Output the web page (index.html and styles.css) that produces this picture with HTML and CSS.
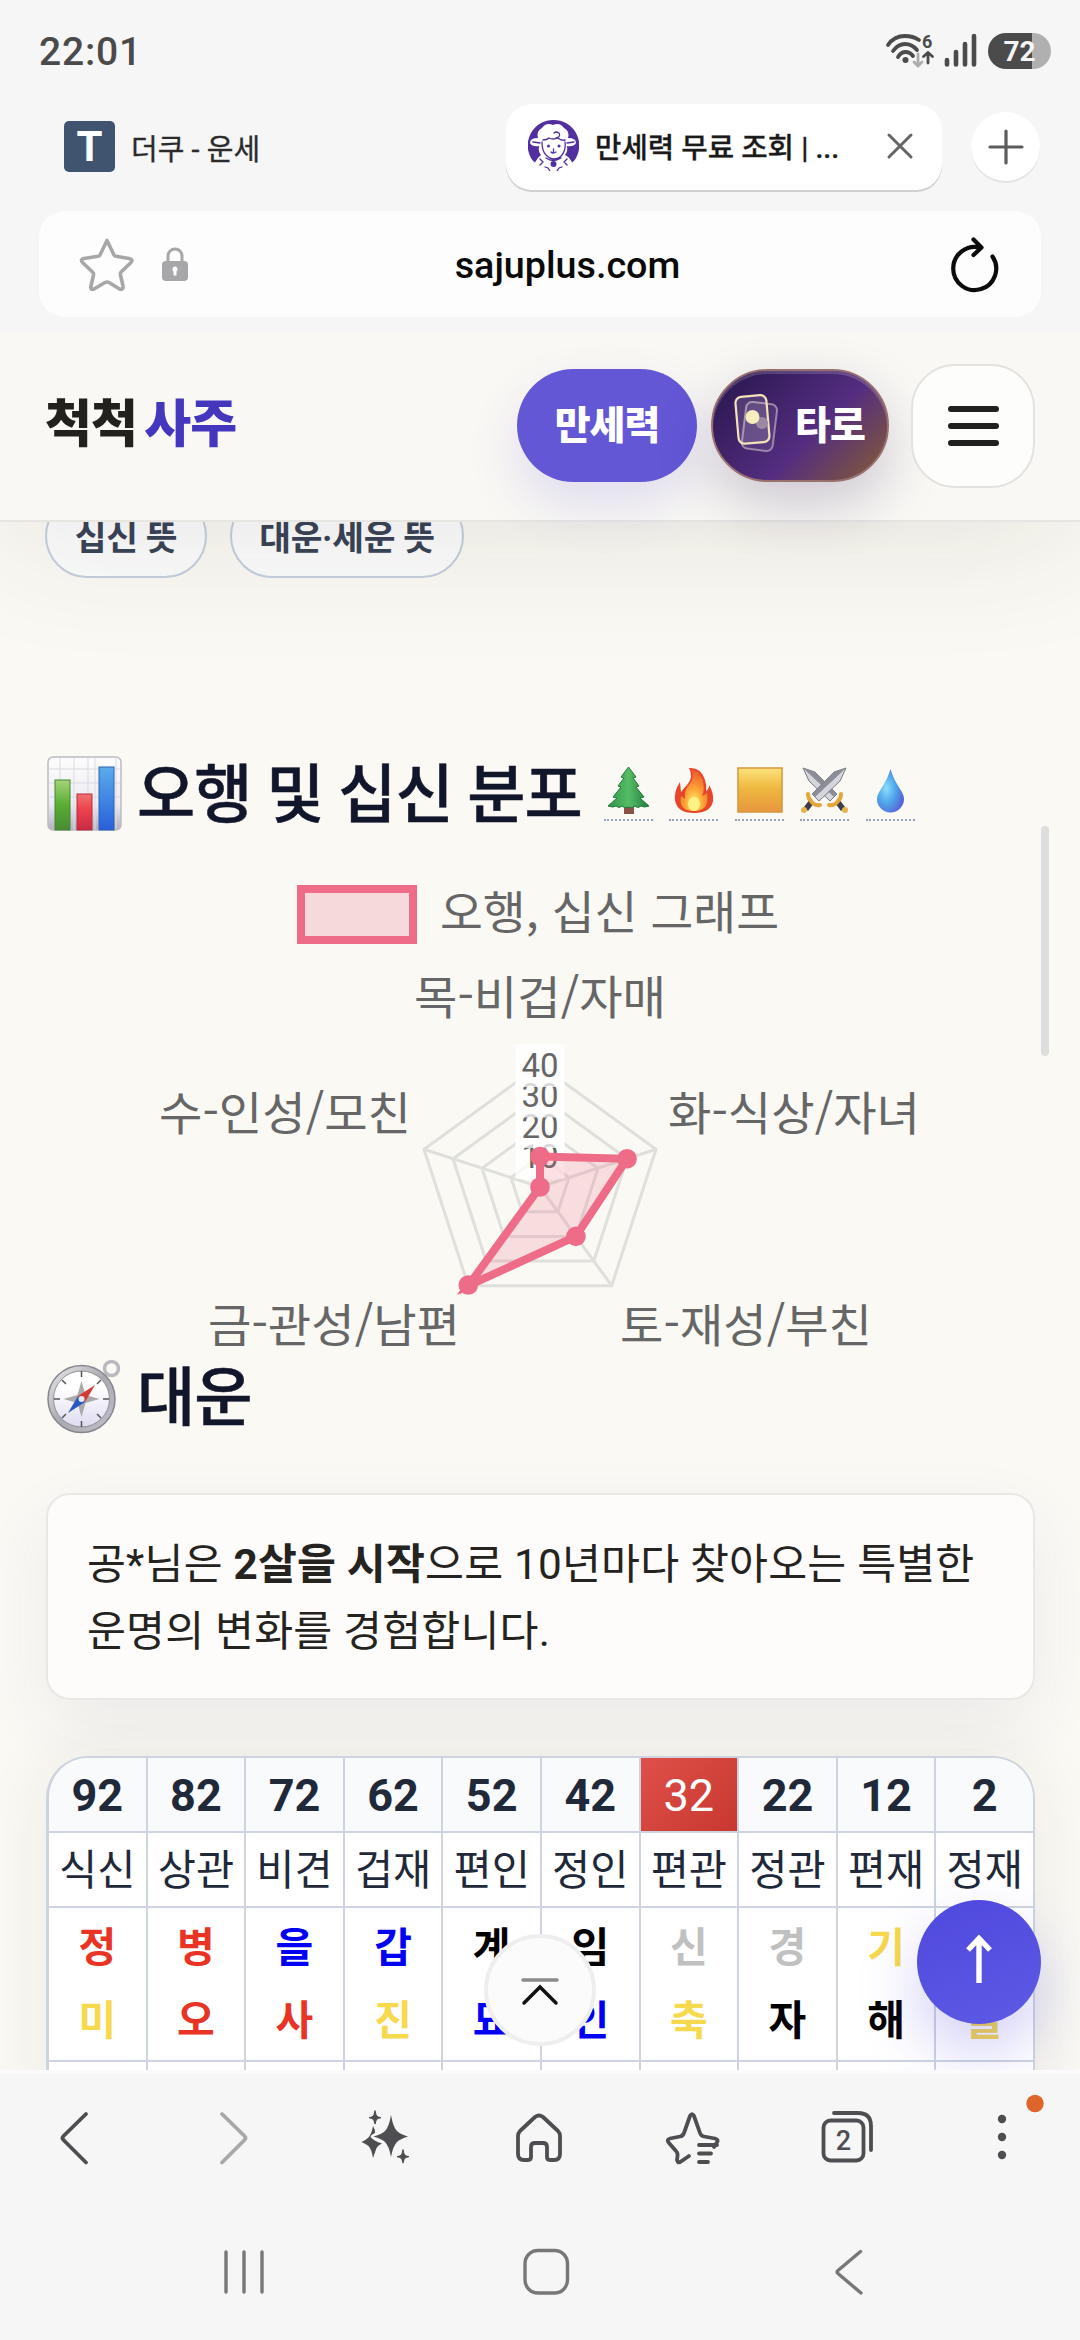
FILE: index.html
```html
<!DOCTYPE html>
<html lang="ko">
<head>
<meta charset="utf-8">
<title>만세력 무료 조회</title>
<link rel="stylesheet" href="styles.css">
</head>
<body>
<div class="phone">
  <div class="status">
    <span class="clock">22:01</span>
    <div class="status-icons">
      <svg class="signal" width="94" height="38" viewBox="884 32 94 38" fill="none" stroke="#4b4b4b" stroke-linecap="round">
        <path stroke-width="3.8" d="M888 45Q894 36 905 36Q913 36 919 40M893 51Q898 44 905 44Q912 44 917 50M898 57Q901 52 905.500 52Q910 52 913 56"/>
        <circle cx="905.500" cy="60" r="3" fill="#4b4b4b" stroke="none"/>
        <path stroke="#adadad" stroke-width="2.800" d="M918 54V66M914 62L918 66L922 62"/>
        <path stroke-width="2.800" d="M928 63V53M923.500 56.500L928 52.500L932.500 56.500"/>
        <text x="922" y="48" class="wifi-gen">6</text>
        <path stroke-width="4.600" d="M947 60V64.500M956 52V64.500M965 44V64.500M974 36V64.500"/>
      </svg>
      <span class="battery">72</span>
    </div>
  </div>

  <div class="tabs">
    <div class="tab">
      <span class="fav-t">T</span>
      <span class="tab-name">더쿠 - 운세</span>
    </div>
    <div class="tab active">
      <svg width="51" height="51" viewBox="0 0 51 51">
        <path fill="#512fa0" d="M25.500 0A25.500 25.500 0 0 1 48 38Q46 42 40 45H11Q5 42 3 38A25.500 25.500 0 0 1 25.500 0z"/>
        <path fill="#fff" d="M25 5q7-3 11 3q6 3 4 10q8 0 8 5q-2 4-9 3q1 6-2 9q8 3 8 16H6q-1-10 7-16q-3-3-2-9q-7 1-9-3q0-5 8-5q-2-7 4-10q4-6 11-3z"/>
        <path fill="none" stroke="#512fa0" stroke-width="1.300" stroke-linecap="round" d="M15 20q4 0 6-2q4 2 9 0q3 3 7 2M14 22q0 9 4 13q4 4 8 4q5 0 8-4q4-5 3-13M5 22l7 1M46 22l-7 1M28 18q5-1 3-5q-3-2-5 0M23 32q2 2 5 0M25.500 29v3M18 38q7 5 15 0M12 39l3 3l-3 3M39 39l-3 3l3 3M17 47l3 1l2 3M34 47l-3 1l-2 3"/>
        <circle cx="20.500" cy="26" r="1.500" fill="#512fa0"/><circle cx="31" cy="26" r="1.500" fill="#512fa0"/>
        <circle cx="25.500" cy="44" r="3" fill="#512fa0"/>
      </svg>
      <span class="tab-name strong">만세력 무료 조회 | ...</span>
      <svg class="close" width="28" height="28" viewBox="0 0 28 28" fill="none" stroke="#666" stroke-width="3" stroke-linecap="round"><path d="M3 3L25 25M25 3L3 25"/></svg>
    </div>
    <div class="new-tab">
      <svg width="36" height="36" viewBox="0 0 36 36" fill="none" stroke="#5c5c5c" stroke-width="3.200" stroke-linecap="round"><path d="M18 2V34M2 18H34"/></svg>
    </div>
  </div>

  <div class="address">
    <svg width="112" height="58" viewBox="78 236 112 58">
      <path d="M107 241.500L114 256Q114.500 257 116 257.300L129 259.500Q134 260.500 130.500 264L121 273Q120 274.500 120.500 276L123 287Q123.500 291.500 119.500 290L109 283.500Q107 282.500 105 283.500L94 290Q90 291.500 91 287L93.500 276Q94 274.500 92.500 273L83 264Q79.500 260.500 84 259.500L98 257.300Q99.500 257 100 256Z" fill="none" stroke="#a7a7a9" stroke-width="3.600" stroke-linejoin="round"/>
      <path d="M168 264V257a7 7 0 0 1 14 0V264" fill="none" stroke="#a7a7a9" stroke-width="3"/>
      <rect x="162" y="262" width="26" height="20" rx="4" fill="#a7a7a9"/>
      <path d="M175 267.500a2.800 2.800 0 0 1 1.500 5v4h-3v-4a2.800 2.800 0 0 1 1.500-5z" fill="#fff"/>
    </svg>
    <span class="url">sajuplus.com</span>
    <svg width="54" height="60" viewBox="945 232 54 60" fill="none" stroke="#0b0b0b" stroke-width="4.200" stroke-linecap="round" stroke-linejoin="round">
      <path d="M990.500 254.500A21.500 21.500 0 1 1 979 246M971.500 237.500L979.500 245.500L971.500 253"/>
    </svg>
  </div>

  <header class="site-head">
    <div class="logo">척척<em>사주</em></div>
    <a class="pill saju">만세력</a>
    <a class="pill tarot">
      <svg width="50" height="70" viewBox="730 395 50 70">
        <rect x="744" y="407" width="31" height="47" rx="6" fill="#ffffff14" stroke="#9b85a8" stroke-width="2" transform="rotate(7 760 430)"/>
        <rect x="737" y="400" width="31" height="47" rx="6" fill="#ffffff22" stroke="#f3e3b8" stroke-width="2.200" transform="rotate(-5 752 424)"/>
        <circle cx="762" cy="427" r="6" fill="#9b88a4"/>
        <circle cx="752.500" cy="421" r="7" fill="#f7ecbd"/>
      </svg>
      <span>타로</span>
    </a>
    <div class="menu"><i></i><i></i><i></i></div>
  </header>

  <main class="page">
    <div class="chips"><span class="chip">십신 뜻</span><span class="chip wide">대운·세운 뜻</span></div>

    <h2 class="heading first">
      <svg width="75" height="75" viewBox="0 0 75 75">
        <defs>
          <linearGradient id="paper" x2="0" y2="1"><stop offset="0" stop-color="#fdfdfd"/><stop offset=".65" stop-color="#ececf1"/><stop offset="1" stop-color="#b4b0bf"/></linearGradient>
          <linearGradient id="green" x2="0" y2="1"><stop offset="0" stop-color="#a5d47a"/><stop offset=".5" stop-color="#59ad31"/><stop offset="1" stop-color="#4a8a35"/></linearGradient>
          <linearGradient id="red" x2="0" y2="1"><stop offset="0" stop-color="#ee7470"/><stop offset=".4" stop-color="#ee4450"/><stop offset="1" stop-color="#c92a42"/></linearGradient>
          <linearGradient id="blue" x2="0" y2="1"><stop offset="0" stop-color="#5baceb"/><stop offset="1" stop-color="#2a5fda"/></linearGradient>
        </defs>
        <rect x="1" y="1" width="73" height="73" rx="5" fill="url(#paper)" stroke="#bcbac3" stroke-width="1.500"/>
        <path stroke="#d9dbe3" stroke-width="1" d="M2 13H73M2 27H73M2 41H73M2 55H73M13 2V73M27 2V73M41 2V73M48 2V73M69 2V73"/>
        <rect x="8" y="24" width="15" height="50" fill="url(#green)" stroke="#458538"/>
        <rect x="30" y="38" width="15" height="36" fill="url(#red)" stroke="#b82c3e"/>
        <rect x="52" y="11" width="15" height="63" fill="url(#blue)" stroke="#2c62b4"/>
      </svg>
      <span class="title-text">오행 및 십신 분포</span>
      <span class="elements">
        <span class="el"><svg width="49" height="49" viewBox="0 0 49 49"><defs><linearGradient id="tree"><stop offset="0" stop-color="#2f9449"/><stop offset=".5" stop-color="#55bd64"/><stop offset="1" stop-color="#237c40"/></linearGradient></defs><path fill="#8a5145" d="M20 38h10v10H20z"/><path fill="url(#tree)" stroke="#237a3c" d="M24.500 1L32 11l-3 1l6 8l-3 1l8 10l-4 1l9 8q-5 2-8 0q-3 3-6 0q-3 3-6.500 1q-4 2-6.500-1q-3 3-6 0q-3 2-8 0l9-8l-4-1l8-10l-3-1l6-8l-3-1z"/></svg></span>
        <span class="el"><svg width="49" height="49" viewBox="0 0 49 49"><defs><radialGradient id="fire" cy=".8" r=".8"><stop offset="0" stop-color="#fff171"/><stop offset=".4" stop-color="#fca838"/><stop offset="1" stop-color="#ed5328"/></radialGradient></defs><path fill="#e8452a" d="M20 2q12-1 16 12q2 6 1 11q3-2 3-6q5 8 4 16q-2 12-19 12Q8 47 6 34q-1-9 5-18l1 10q3-4 6-7q7-8 2-17z"/><path fill="url(#fire)" d="M22 3q9 2 12 12q2 9-1 15q3-1 5-3q3 18-13 18Q9 45 12 30l4 3q-1-9 4-14q6-7 2-16z"/><ellipse cx="25" cy="38" rx="6" ry="7" fill="#fff284"/></svg></span>
        <span class="el"><svg width="49" height="49" viewBox="0 0 49 49"><defs><linearGradient id="gold" x2="0" y2="1"><stop offset="0" stop-color="#fce37e"/><stop offset=".45" stop-color="#eeb93f"/><stop offset="1" stop-color="#e8963e"/></linearGradient></defs><rect x="3" y="2" width="44" height="44" fill="url(#gold)" stroke="#d9953c" stroke-width="1.500"/></svg></span>
        <span class="el"><svg width="49" height="49" viewBox="0 0 49 49"><g id="sword"><path fill="#d5d6db" stroke="#777985" d="M3 2L15 6L37 28L30 35L9 15Z"/><path fill="#8b8d97" d="M3 2L15 6L37 28L34 31Z"/><path fill="#3b3d47" d="M35 37l4-4l6 8l-4 4z"/><circle cx="45" cy="44" r="3" fill="#e9b24a"/><path fill="none" stroke="#e5a53b" stroke-width="4" stroke-linecap="round" d="M29 39q6 1 9-4q3-3 3-7"/></g><use href="#sword" transform="matrix(-1 0 0 1 49 0)"/></svg></span>
        <span class="el"><svg width="49" height="49" viewBox="0 0 49 49"><defs><radialGradient id="drop" cx=".35" cy=".45" r=".65"><stop offset="0" stop-color="#8bddfb"/><stop offset=".5" stop-color="#4fa8ec"/><stop offset="1" stop-color="#5567d6"/></radialGradient></defs><path fill="url(#drop)" d="M24.500 3Q27 12 34 23q4 6 4 10a13.500 13.500 0 0 1-27 0q0-4 4-10Q22 12 24.500 3z"/></svg></span>
      </span>
    </h2>

    <svg class="radar" width="1080" height="484" viewBox="0 870 1080 484">
      <defs><clipPath id="area"><rect x="400" y="1040" width="280" height="255.500"/></clipPath></defs>
      <rect x="301" y="890" width="112" height="51" fill="#f6dadb" stroke="#ee6c87" stroke-width="8"/>
      <text class="lbl" x="440" y="930" textLength="339" lengthAdjust="spacingAndGlyphs">오행, 십신 그래프</text>
      <g fill="none" stroke="#dfdfdb" stroke-width="3">
        <path d="M540 1066L656 1150.300L611.700 1286.700H468.300L424 1150.300Z"/>
        <path d="M540 1096.500L627 1159.700L593.800 1262H486.200L453 1159.700Z"/>
        <path d="M540 1127L598 1169.200L575.900 1237.400H504.100L482 1169.200Z"/>
        <path d="M540 1157.500L569 1178.600L557.900 1212.700H522.100L511 1178.600Z"/>
        <path d="M540 1188V1066M540 1188L656 1150.300M540 1188L611.700 1286.700M540 1188L468.300 1286.700M540 1188L424 1150.300"/>
      </g>
      <g class="tick">
        <rect x="515.500" y="1137" width="49" height="43"/><text x="540" y="1169">10</text>
        <rect x="515.500" y="1106" width="49" height="43"/><text x="540" y="1138.500">20</text>
        <rect x="515.500" y="1075.500" width="49" height="43"/><text x="540" y="1108">30</text>
        <rect x="515.500" y="1045" width="49" height="43"/><text x="540" y="1077.500">40</text>
      </g>
      <g clip-path="url(#area)">
        <path d="M540 1157.500L627 1159.700L575.900 1237.400L468.300 1286.700L540 1188Z" fill="#ee6c87" fill-opacity=".2" stroke="#ee6c87" stroke-width="8"/>
      </g>
      <g fill="#ee6c87"><circle cx="540" cy="1157.500" r="9.800"/><circle cx="627" cy="1159.700" r="9.800"/><circle cx="575.900" cy="1237.400" r="9.800"/><circle cx="468.300" cy="1286" r="9.800"/><circle cx="540" cy="1188" r="9.800"/></g>
      <text class="lbl" x="414" y="1015" textLength="252" lengthAdjust="spacingAndGlyphs">목-비겁/자매</text>
      <text class="lbl" x="159" y="1131" textLength="252" lengthAdjust="spacingAndGlyphs">수-인성/모친</text>
      <text class="lbl" x="668" y="1131" textLength="252" lengthAdjust="spacingAndGlyphs">화-식상/자녀</text>
      <text class="lbl" x="208" y="1343" textLength="252" lengthAdjust="spacingAndGlyphs">금-관성/남편</text>
      <text class="lbl" x="620" y="1343" textLength="252" lengthAdjust="spacingAndGlyphs">토-재성/부친</text>
    </svg>

    <h2 class="heading second">
      <svg width="75" height="75" viewBox="0 0 75 75">
        <defs><linearGradient id="rim" x2="1" y2="1"><stop offset="0" stop-color="#ececee"/><stop offset=".5" stop-color="#a9a9b1"/><stop offset="1" stop-color="#c3bfcb"/></linearGradient><linearGradient id="face" x2="0" y2="1"><stop offset=".3" stop-color="#fff"/><stop offset="1" stop-color="#dddbf0"/></linearGradient></defs>
        <circle cx="64.500" cy="9.500" r="7" fill="none" stroke="#b9b9bf" stroke-width="3.500"/>
        <circle cx="34.500" cy="40" r="33.500" fill="url(#rim)" stroke="#87868c" stroke-width="1.500"/>
        <circle cx="34.500" cy="40" r="28" fill="url(#face)" stroke="#929297"/>
        <path stroke="#555" stroke-width="1.500" d="M34.500 12v6M34.500 62v6M7 40h6M56 40h6M15 21l4 4M54 21l-4 4M15 59l4-4M54 59l-4-4"/>
        <path fill="#aaa9a8" d="M34.500 22l4 14l14 4l-14 4l-4 14l-4-14l-14-4l14-4z"/>
        <path fill="#d53b35" d="M48 26L38 43L31 37Z"/><path fill="#2857c5" d="M21 54L31 37L38 43Z"/>
        <circle cx="34.500" cy="40" r="3" fill="#e4e8f5"/>
      </svg>
      <span class="title-text">대운</span>
    </h2>

    <p class="card">공*님은 <b>2살을 시작</b>으로 10년마다 찾아오는 특별한<br>운명의 변화를 경험합니다.</p>

    <div class="luck">
      <div class="row ages"><span>92</span><span>82</span><span>72</span><span>62</span><span>52</span><span>42</span><span class="now">32</span><span>22</span><span>12</span><span>2</span></div>
      <div class="row gods"><span>식신</span><span>상관</span><span>비견</span><span>겁재</span><span>편인</span><span>정인</span><span>편관</span><span>정관</span><span>편재</span><span>정재</span></div>
      <div class="row stems">
        <span><b class="r">정</b><b class="y">미</b></span><span><b class="r">병</b><b class="r">오</b></span><span><b class="b">을</b><b class="r">사</b></span><span><b class="b">갑</b><b class="y">진</b></span><span><b>계</b><b class="b">묘</b></span><span><b>임</b><b class="b">인</b></span><span><b class="g">신</b><b class="y">축</b></span><span><b class="g">경</b><b>자</b></span><span><b class="y">기</b><b>해</b></span><span><b class="y">무</b><b class="y">술</b></span>
      </div>
      <div class="row rest"><span></span><span></span><span></span><span></span><span></span><span></span><span></span><span></span><span></span><span></span></div>
    </div>

    <div class="scrollbar"></div>
    <div class="jump">
      <svg width="40" height="32" viewBox="0 0 40 32" fill="none" stroke-width="3.500" stroke-linecap="round"><path stroke="#8a8a8a" d="M3 4H37"/><path stroke="#111" d="M4 27L20 11L36 27"/></svg>
    </div>
    <div class="top-btn">
      <svg width="30" height="52" viewBox="0 0 30 52" fill="none" stroke="#fff" stroke-width="5.400"><path d="M15 50V6M4 17L15 5.500L26 17"/></svg>
    </div>
  </main>

  <nav class="toolbar">
    <svg class="nav-icons" width="1080" height="130" viewBox="0 2070 1080 130" fill="none" stroke="#4e4e52" stroke-width="3.800" stroke-linecap="round" stroke-linejoin="round">
      <path d="M86 2114L63.500 2136Q61.500 2138 63.500 2140L86 2162.500"/>
      <path stroke="#a8a8a9" d="M222 2114L244.500 2136Q246.500 2138 244.500 2140L222 2162.500"/>
      <g fill="#4e4e52" stroke="none">
        <path d="M391 2115Q393 2127 397 2131Q400 2134 408 2136.500Q400 2139 397 2142Q393 2146 391 2157Q389 2146 385 2142Q382 2139 373.500 2136.500Q382 2134 385 2131Q389 2127 391 2115Z"/>
        <path d="M373 2126Q375.500 2130 375 2133Q370.500 2135 370.500 2137Q374 2141 382 2143.500Q378 2145 376.500 2148L373 2158Q371.500 2149 368.500 2146Q366 2144 361.500 2142Q366 2140 368.500 2137.500Q371.500 2134 373 2126Z"/>
        <path d="M375 2111q1 4.500 2 5.300q1 .8 4 1.400q-3 .6-4 1.400q-1 .8-2 5q-1-4.200-2-5q-1-.8-4-1.400q3-.6 4-1.400q1-.8 2-5.300zM403 2150q1 4.500 2 5.300q1 .8 4 1.400q-3 .6-4 1.400q-1 .8-2 5q-1-4.200-2-5q-1-.8-4-1.400q3-.6 4-1.400q1-.8 2-5.300z" stroke="#4e4e52" stroke-width="1"/>
      </g>
      <path d="M518 2136Q518 2133 520 2131L535 2117Q539 2114 543 2117L558 2131Q560 2133 560 2136V2154Q560 2160 554 2160H550Q547 2160 547 2157V2147Q547 2143 543 2143H535Q531 2143 531 2147V2157Q531 2160 528 2160H524Q518 2160 518 2154Z"/>
      <path d="M714 2147L716.500 2143Q719.500 2140 715 2138.500L704 2136.500Q701 2136 700 2133L694 2116Q692 2112.500 690 2116L684 2133Q683 2136 680 2136.500L670 2138.500Q666 2139.500 669 2143L676 2151Q678 2153 677.500 2156L677 2160Q678 2164 681 2161.500L689 2156M699 2145H717M699 2153.500H711M699 2162H708"/>
      <rect x="823.500" y="2120.500" width="40" height="40" rx="7"/>
      <path d="M834 2113H858Q871 2113 871 2126V2150"/>
      <text class="tab-count" x="843.500" y="2150">2</text>
      <g fill="#4e4e52" stroke="none"><circle cx="1002" cy="2119" r="4.200"/><circle cx="1002" cy="2137" r="4.200"/><circle cx="1002" cy="2155" r="4.200"/></g>
      <circle cx="1035" cy="2103.500" r="8.700" fill="#de662b" stroke="none"/>
    </svg>
    <svg class="sys-icons" width="1080" height="140" viewBox="0 2200 1080 140" fill="none" stroke="#777" stroke-width="3.400" stroke-linecap="round" stroke-linejoin="round">
      <path d="M226 2252V2292M244 2252V2292M262 2252V2292"/>
      <rect x="525" y="2250.500" width="42.500" height="42.500" rx="13"/>
      <path d="M860.500 2251.500L838 2270.500Q836 2272 838 2273.500L861 2293"/>
    </svg>
  </nav>
</div>
</body>
</html>
```
FILE: styles.css
```css
* { box-sizing: border-box; }
body { margin: 0; background: #f6f6f6; font-family: Roboto, "Noto Sans CJK KR", sans-serif; }
svg { display: block; flex: none; }
.phone { width: 1080px; height: 2340px; overflow: hidden; display: flex; flex-direction: column; background: #f6f6f6; }

.status { height: 104px; padding: 32px 29px 0 39px; display: flex; justify-content: space-between; align-items: flex-start; }
.clock { font-size: 39px; font-weight: 500; line-height: 40px; color: #4a4a4a; letter-spacing: .8px; }
.status-icons { display: flex; align-items: center; gap: 10px; }
.wifi-gen { font: 700 18px Roboto, sans-serif; fill: #4b4b4b; stroke: none; }
.battery { width: 63px; height: 36px; border-radius: 18px; text-align: center; background: linear-gradient(90deg, #4b4b4b 70%, #b0b0b0 70%); color: #f4f4f4; font-size: 28px; font-weight: 700; line-height: 37px; }

.tabs { height: 86px; padding: 0 40px 0 64px; display: flex; align-items: center; }
.tab { display: flex; align-items: center; width: 442px; }
.fav-t { width: 51px; height: 51px; border-radius: 5px; background: #40536f; color: #fff; font: 700 42px/51px Roboto, sans-serif; text-align: center; }
.tab-name { margin-left: 16px; font-size: 29px; color: #2b2b2b; white-space: nowrap; -webkit-text-stroke: .3px #2b2b2b; }
.tab.active { width: 436px; height: 86px; padding: 0 28px 2px 22px; border-radius: 26px; background: #fff; box-shadow: 0 2px 0 #d0d0d0; }
.tab-name.strong { font-size: 28.7px; font-weight: 500; color: #191919; }
.close { margin-left: auto; }
.new-tab { margin-left: auto; width: 69px; height: 69px; border-radius: 50%; background: #fff; box-shadow: 0 2px 0 #e3e3e3; display: flex; align-items: center; justify-content: center; }

.address { height: 107px; margin: 21px 39px 14px; padding: 0 40px 0 39px; border-radius: 26px; background: #fdfdfd; display: grid; grid-template-columns: 112px 1fr 112px; align-items: center; }
.address svg:last-child { justify-self: end; }
.url { font-size: 37.7px; font-weight: 500; line-height: 40px; color: #0a0a0a; text-align: center; padding: 2px 0 0 56px; margin-right: 0; }

.site-head { height: 191px; flex: none; padding: 0 45px; display: flex; align-items: center; background: #f9f8f4; border-bottom: 2px solid #e6e5e1; position: relative; box-shadow: 0 20px 130px rgba(60, 45, 20, .1); z-index: 2; clip-path: inset(0 0 -170px 0); }
.logo { font-size: 51px; font-weight: 900; letter-spacing: -.8px; line-height: 60px; color: #22211e; margin: -2px auto 0 0; white-space: nowrap; }
.logo em { font-style: normal; color: #4437bd; margin-left: 7px; }
.pill { display: flex; align-items: center; height: 113px; border-radius: 57px; color: #fff; font-size: 39px; font-weight: 900; line-height: 60px; letter-spacing: -1px; }
.saju { width: 180px; justify-content: center; background: #6357d6; margin-right: 14px; box-shadow: 0 24px 50px rgba(99, 87, 214, .16); }
.tarot { width: 178px; padding-left: 17px; gap: 15px; margin-right: 22px; border: 2px solid #98716f; background: linear-gradient(135deg, #321b59 15%, #542d80 58%, #7a5244 90%); box-shadow: 0 22px 55px rgba(50, 27, 89, .22), inset 0 3px 0 rgba(255, 255, 255, .16); }
.menu { width: 124px; height: 124px; border-radius: 44px; border: 2px solid #e3e2df; background: #fdfdfb; display: flex; flex-direction: column; align-items: center; justify-content: center; gap: 11px; }
.menu i { width: 51px; height: 6px; border-radius: 3px; background: #20201e; }

.page { height: 1549px; flex: none; margin-top: -1px; position: relative; overflow: hidden; background: #faf9f4; display: flex; flex-direction: column; }
.chips { margin: -27px 0 0 45px; display: flex; gap: 23px; }
.chip { width: 162px; height: 84px; border: 2px solid #c5cfde; border-radius: 42px; background: #fbfcfd; text-align: center; font-size: 34.5px; font-weight: 700; line-height: 84px; color: #384357; letter-spacing: -.3px; white-space: nowrap; }
.chip.wide { width: 234px; }

.heading { margin: 0 0 0 47px; height: 80px; display: flex; align-items: center; }
.heading.first { margin-top: 175px; }
.heading.second { margin-top: 3px; }
.title-text { margin: 4px 0 0 15px; font-size: 63.3px; font-weight: 500; line-height: 80px; letter-spacing: -1px; color: #11162a; white-space: nowrap; -webkit-text-stroke: .5px #11162a; }
.elements { margin-left: 22px; display: flex; gap: 16.500px; }
.el { width: 49px; height: 55px; border-bottom: 2px dotted #94a3b8; }

.radar { margin-top: 36px; }
.lbl { font: 400 46px "Noto Sans CJK KR", sans-serif; fill: #666; }
.tick { font: 400 33px Roboto, sans-serif; text-anchor: middle; fill: #666; }
.tick rect { fill: #fff; fill-opacity: .75; }

.card { margin: 57px 45px 0 46px; height: 207px; padding: 36px 39px; border: 2px solid #e9e8e4; border-radius: 24px; background: #fdfcfa; box-shadow: 0 25px 70px rgba(70, 60, 110, .07); font-size: 42.3px; letter-spacing: .2px; line-height: 67px; color: #242320; white-space: nowrap; }

.luck { margin: 56px 45px 0 46px; flex: none; height: 500px; border: 2px solid #cdd4df; border-left-width: 3px; border-radius: 42px; overflow: hidden; background: #fff; box-shadow: 0 0 70px rgba(50, 40, 10, .07); }
.row { display: flex; border-bottom: 2px solid #cdd4df; color: #1f293a; }
.row > span { flex: 1; text-align: center; border-right: 2px solid #cdd4df; white-space: nowrap; }
.row > span:last-child { border-right: 0; }
.ages { height: 75px; font-size: 45px; font-weight: 700; line-height: 75px; background: #f8fafc; }
.ages .now { font-weight: 400; color: #fff; background: linear-gradient(135deg, #de5049, #c83830); }
.gods { height: 75px; font-size: 41.500px; line-height: 75px; }
.stems { height: 154px; font-size: 41px; }
.stems span { padding-top: 4px; }
.stems b { display: block; line-height: 73px; color: #000; }
.stems .r { color: #e93425; }
.stems .b { color: #0000f5; }
.stems .y { color: #f6d94d; }
.stems .g { color: #c0c0c0; }
.rest { height: 160px; }

.scrollbar { position: absolute; left: 1041px; top: 305px; width: 8px; height: 230px; border-radius: 4px; background: #dededf; }
.jump { position: absolute; left: 484px; top: 1413px; width: 112px; height: 112px; border-radius: 50%; border: 4px solid #eee; background: #fbfbfb; display: flex; align-items: center; justify-content: center; padding-top: 4px; }
.top-btn { position: absolute; left: 917px; top: 1379px; width: 124px; height: 124px; border-radius: 50%; background: linear-gradient(160deg, #5048de, #5d5ae4); box-shadow: 0 28px 60px rgba(80, 72, 222, .26); display: flex; align-items: center; justify-content: center; padding-bottom: 6px; }

.toolbar { height: 270px; flex: none; background: #f6f6f6; border-top: 4px solid #fbfbfb; }
.nav-icons { margin-top: -4px; }
.tab-count { font: 500 27px Roboto, sans-serif; fill: #4e4e52; stroke: none; text-anchor: middle; }
```
